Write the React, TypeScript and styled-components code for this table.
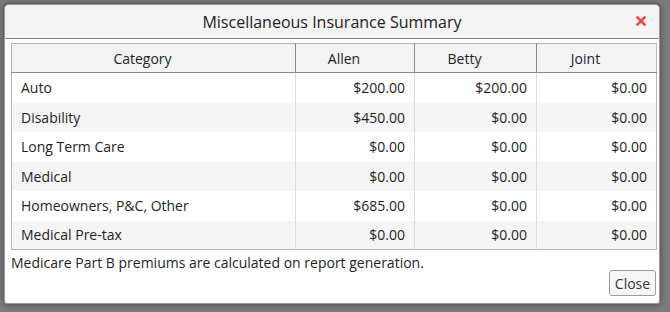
import React from 'react';
import styled, { createGlobalStyle } from 'styled-components';

const GlobalStyle = createGlobalStyle`
  html, body {
    margin: 0;
    padding: 0;
    background: #7b7b7b;
    font-family: "Open Sans", "Noto Sans", "DejaVu Sans", sans-serif;
    color: #1e1e1e;
  }
`;

interface Row {
  category: string;
  allen: string;
  betty: string;
  joint: string;
}

const rows: Row[] = [
  { category: 'Auto', allen: '$200.00', betty: '$200.00', joint: '$0.00' },
  { category: 'Disability', allen: '$450.00', betty: '$0.00', joint: '$0.00' },
  { category: 'Long Term Care', allen: '$0.00', betty: '$0.00', joint: '$0.00' },
  { category: 'Medical', allen: '$0.00', betty: '$0.00', joint: '$0.00' },
  { category: 'Homeowners, P&C, Other', allen: '$685.00', betty: '$0.00', joint: '$0.00' },
  { category: 'Medical Pre-tax', allen: '$0.00', betty: '$0.00', joint: '$0.00' },
];

const StyledOverlay = styled.div`
  width: 670px;
  height: 312px;
  padding: 4px 0 0 4px;
  box-sizing: border-box;
  overflow: hidden;
`;

const StyledDialog = styled.div`
  width: 656px;
  height: 300px;
  box-sizing: border-box;
  background: #ffffff;
  border: 1px solid #9a9a9a;
  border-radius: 5px 5px 3px 3px;
  box-shadow: 0 0 6px rgba(0, 0, 0, 0.45);
  display: flex;
  flex-direction: column;
  overflow: hidden;
`;

const StyledHeader = styled.div`
  position: relative;
  height: 33px;
  flex: none;
  background: #f4f4f4;
  border-bottom: 1px solid #858585;
  display: flex;
  align-items: center;
  justify-content: center;
`;

const StyledTitle = styled.h2`
  margin: 0;
  font-size: 16px;
  font-weight: 400;
  color: #222;
`;

const StyledCloseX = styled.button`
  position: absolute;
  right: 11px;
  top: 9px;
  border: none;
  background: transparent;
  padding: 0;
  width: 14px;
  height: 14px;
  display: flex;
  align-items: center;
  justify-content: center;
`;

const StyledBody = styled.div`
  flex: 1;
  padding: 4px 3px 0 6px;
  display: flex;
  flex-direction: column;
`;

const StyledTable = styled.table`
  width: 645px;
  table-layout: fixed;
  border-collapse: collapse;
  border: 1px solid #a9b9c6;
  font-size: 14px;
`;

const StyledTh = styled.th<{ $last?: boolean }>`
  height: 28px;
  padding: 0 22px 0 0;
  background: #f3f3f3;
  font-weight: 400;
  text-align: center;
  border-bottom: 1px solid #8a8a8a;
  border-right: ${(p) => (p.$last ? 'none' : '1px solid #8a8a8a')};
`;

const StyledTr = styled.tr<{ $striped: boolean }>`
  background: ${(p) => (p.$striped ? '#f5f5f5' : '#ffffff')};
`;

const StyledTd = styled.td<{ $align?: 'left' | 'right'; $last?: boolean; $tall: boolean }>`
  height: ${(p) => (p.$tall ? 30 : 29)}px;
  padding: 0 9px;
  box-sizing: border-box;
  text-align: ${(p) => p.$align || 'right'};
  border-right: ${(p) => (p.$last ? 'none' : '1px solid #dcdcdc')};
`;

const StyledNote = styled.p`
  margin: 3px 0 0 0;
  font-size: 14px;
  line-height: 19px;
`;

const StyledFooter = styled.div`
  display: flex;
  justify-content: flex-end;
  margin-top: -2px;
`;

const StyledButton = styled.button`
  width: 47px;
  height: 26px;
  padding: 0;
  font-family: inherit;
  font-size: 14px;
  color: #333;
  background: #f6f6f6;
  border: 1px solid #9c9c9c;
  border-radius: 3px;
`;

const CloseIcon: React.FC = () => (
  <svg width="10" height="10" viewBox="0 0 10 10">
    <path d="M1.5 1.5 L8.5 8.5 M8.5 1.5 L1.5 8.5" stroke="#f24a4a" strokeWidth="2.6" strokeLinecap="square" />
  </svg>
);

const App: React.FC = () => {
  return (
    <>
      <GlobalStyle />
      <StyledOverlay>
        <StyledDialog>
          <StyledHeader>
            <StyledTitle>Miscellaneous Insurance Summary</StyledTitle>
            <StyledCloseX aria-label="close">
              <CloseIcon />
            </StyledCloseX>
          </StyledHeader>

          <StyledBody>
            <StyledTable>
              <colgroup>
                <col style={{ width: 284 }} />
                <col style={{ width: 119 }} />
                <col style={{ width: 122 }} />
                <col style={{ width: 120 }} />
              </colgroup>
              <thead>
                <tr>
                  <StyledTh>Category</StyledTh>
                  <StyledTh>Allen</StyledTh>
                  <StyledTh>Betty</StyledTh>
                  <StyledTh $last>Joint</StyledTh>
                </tr>
              </thead>
              <tbody>
                {rows.map((row, i) => {
                  const tall = i % 2 === 0;
                  return (
                    <StyledTr key={row.category} $striped={i % 2 === 1}>
                      <StyledTd $align="left" $tall={tall}>
                        {row.category}
                      </StyledTd>
                      <StyledTd $tall={tall}>{row.allen}</StyledTd>
                      <StyledTd $tall={tall}>{row.betty}</StyledTd>
                      <StyledTd $last $tall={tall}>
                        {row.joint}
                      </StyledTd>
                    </StyledTr>
                  );
                })}
              </tbody>
            </StyledTable>

            <StyledNote>Medicare Part B premiums are calculated on report generation.</StyledNote>

            <StyledFooter>
              <StyledButton>Close</StyledButton>
            </StyledFooter>
          </StyledBody>
        </StyledDialog>
      </StyledOverlay>
    </>
  );
};

export default App;
